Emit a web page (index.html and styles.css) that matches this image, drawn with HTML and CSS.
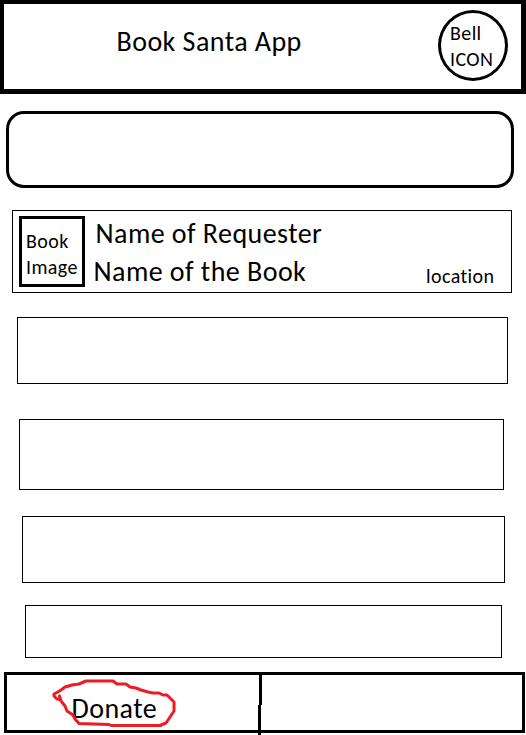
FILE: index.html
```html
<!DOCTYPE html>
<html lang="en">
<head>
<meta charset="utf-8">
<title>Book Santa App</title>
<link rel="stylesheet" href="styles.css">
</head>
<body>
<header class="header">
  <h1 class="title">Book Santa App</h1>
  <div class="bell">Bell<br>ICON</div>
</header>
<div class="search"></div>
<main class="list">
  <article class="request">
    <div class="cover">Book<br>Image</div>
    <div class="info">
      <p class="requester">Name of Requester</p>
      <p class="book">Name of the Book</p>
    </div>
    <p class="location">location</p>
  </article>
  <div class="row row-a"></div>
  <div class="row row-b"></div>
  <div class="row row-c"></div>
  <div class="row row-d"></div>
</main>
<nav class="tabs">
  <div class="tab"><span class="donate">Donate</span></div>
  <svg class="scribble" width="130" height="56" viewBox="48 674 130 56"><path d="M59.500 696 L60 699.500 L57 699 L54 696 L54 694 L57 692.500 L61 690 L65 687 L72 685 L79 684 L86 681 L113 681 L117 684 L126 684 L130 687 L136 688 L141 690 L148 692 L153 693 L159 693 L163 695 L167 695 L171 699 L174 702 L174 711 L170 717 L166 723 L160 725.500 L111 725.500 L109 724.500 L79 723.500 L75 719 L73 715 L67 711 L65 706 L61 701 L59.500 696"/></svg>
  <svg class="divider" width="4" height="63" viewBox="0 0 4 63"><path d="M1 0H4V33H3V63H0V33H1Z"/></svg>
</nav>
</body>
</html>
```
FILE: styles.css
```css
* { box-sizing: border-box; }
body {
  margin: 0;
  width: 526px;
  height: 735px;
  overflow: hidden;
  background: #fff;
  color: #000;
  font-family: Carlito, Lato, "Open Sans", sans-serif;
  font-size: 20px;
  line-height: 26px;
  letter-spacing: 0.4px;
}
h1, p { margin: 0; font-weight: 400; }
.header {
  display: flex;
  justify-content: space-between;
  height: 94px;
  padding: 6px 13px 0 112.5px;
  border: solid #000;
  border-width: 4px 5px 5px 4px;
}
.title {
  padding-top: 17px;
  font-size: 28px;
  line-height: 30px;
  letter-spacing: 0.45px;
  white-space: nowrap;
}
.bell {
  width: 70px;
  height: 71px;
  padding: 7px 0 0 9px;
  border: 3px solid #000;
  border-radius: 50%;
  white-space: nowrap;
}
.search {
  height: 77px;
  margin: 17px 12px 0 6px;
  border: 3px solid #000;
  border-radius: 18px;
}
.list { display: flow-root; }
.request {
  display: flex;
  height: 83px;
  margin: 22px 14px 0 12px;
  padding: 5px 0 0 6px;
  border: 1px solid #000;
}
.cover {
  width: 66px;
  height: 71px;
  padding: 9px 0 0 4px;
  border: 3px solid #000;
  white-space: nowrap;
}
.info {
  width: 341px;
  padding: 3px 0 0 8.5px;
  font-size: 28px;
  line-height: 30px;
  letter-spacing: 0.45px;
  white-space: nowrap;
}
.requester { padding-left: 2px; }
.book { margin-top: 8px; }
.location { padding-top: 47px; }
.row { border: 1px solid #000; }
.row-a { height: 67px; margin: 24px 18px 0 17px; }
.row-b { height: 71px; margin: 35px 22px 0 19px; }
.row-c { height: 67px; margin: 26px 21px 0 22px; }
.row-d { height: 53px; margin: 22px 24px 0 25px; }
.tabs {
  position: relative;
  height: 61px;
  margin: 14px 1px 0 4px;
  border: 3px solid #000;
}
.tab {
  padding: 19px 0 0 64.5px;
  font-size: 28px;
  line-height: 30px;
  letter-spacing: 0.45px;
}
.scribble {
  position: absolute;
  left: 41px;
  top: -1px;
  fill: none;
  stroke: #ed1c24;
  stroke-width: 3px;
  stroke-linejoin: round;
  stroke-linecap: round;
}
.divider { position: absolute; left: 251px; top: -3px; }
```
